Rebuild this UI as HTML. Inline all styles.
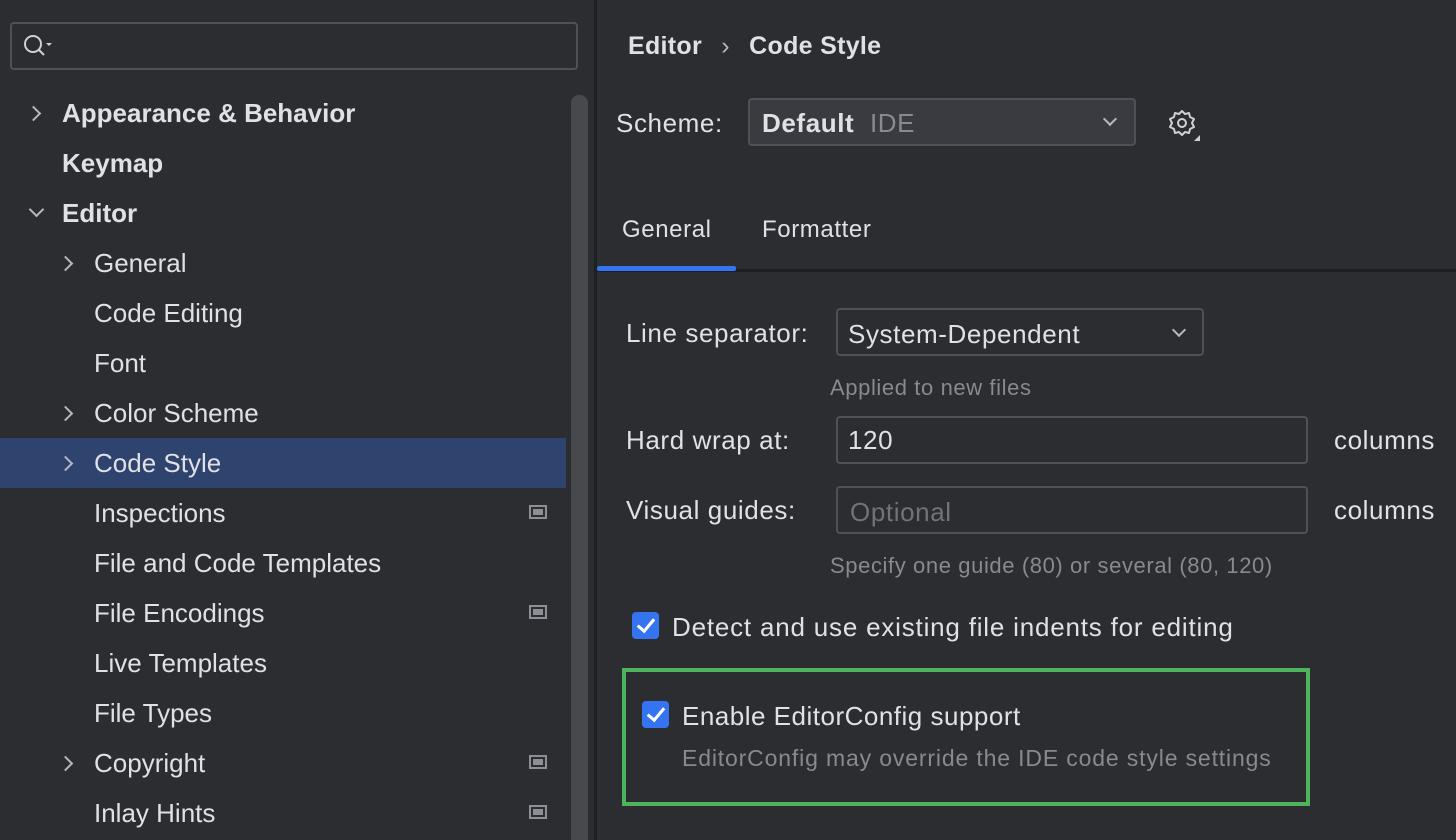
<!DOCTYPE html>
<html><head><meta charset="utf-8"><style>
html,body{margin:0;width:1456px;height:840px;overflow:hidden}
body{background:#2b2d30;font-family:"Liberation Sans",sans-serif;color:#dfe1e5;position:relative}
.a{position:absolute;white-space:nowrap}
.row{position:absolute;left:0;width:566px;height:50px;line-height:50px;font-size:26px}
.sel{background:#2e436e}
.chev{position:absolute;width:9px;height:9px;border-right:2px solid #b4b8bf;border-bottom:2px solid #b4b8bf}
.r{transform:rotate(-45deg)}.d{transform:rotate(45deg)}
.ic{position:absolute;left:529px;width:14px;height:10px;border:2px solid #8c9096;background:#2b2d30}
.ic:after{content:"";position:absolute;left:2px;top:2px;width:10px;height:6px;background:#8c9096}
.box{position:absolute;border:2px solid #4e5157;border-radius:4px;box-sizing:border-box}
.lbl{font-size:26px;letter-spacing:0.6px}
.cb{position:absolute;width:27px;height:27px;background:#3574f0;border-radius:4px}
.cb:after{content:"";position:absolute;left:9px;top:3px;width:7px;height:14px;border-right:3.5px solid #fff;border-bottom:3.5px solid #fff;transform:rotate(40deg)}
.hint{color:#868a91;font-size:22px;letter-spacing:0.6px}
</style></head><body>
<div class="box" style="left:10px;top:22px;width:568px;height:48px;border-color:#4e5157"></div>
<svg class="a" style="left:22px;top:33px" width="36" height="28"><circle cx="11" cy="11" r="8" fill="none" stroke="#ced0d6" stroke-width="2"/><path d="M17 17l5 5" stroke="#ced0d6" stroke-width="2"/><path d="M24 10h6l-3 3z" fill="#ced0d6"/></svg>
<div class="a" style="left:571px;top:95px;width:17px;height:745px;background:#48494c;border-radius:8px 8px 0 0"></div>
<div class="a" style="left:594px;top:0;width:3px;height:840px;background:#1e1f22"></div>

<div class="row" style="top:88px"><div class="chev r" style="left:28px;top:20px"></div><span class="a" style="left:62px;font-weight:bold">Appearance &amp; Behavior</span></div>
<div class="row" style="top:138px"><span class="a" style="left:62px;font-weight:bold">Keymap</span></div>
<div class="row" style="top:188px"><div class="chev d" style="left:31px;top:16px"></div><span class="a" style="left:62px;font-weight:bold">Editor</span></div>
<div class="row" style="top:238px"><div class="chev r" style="left:60px;top:20px"></div><span class="a" style="left:94px">General</span></div>
<div class="row" style="top:288px"><span class="a" style="left:94px">Code Editing</span></div>
<div class="row" style="top:338px"><span class="a" style="left:94px">Font</span></div>
<div class="row" style="top:388px"><div class="chev r" style="left:60px;top:20px"></div><span class="a" style="left:94px">Color Scheme</span></div>
<div class="row sel" style="top:438px"><div class="chev r" style="left:60px;top:20px"></div><span class="a" style="left:94px">Code Style</span></div>
<div class="row" style="top:488px"><span class="a" style="left:94px">Inspections</span><div class="ic" style="top:17px"></div></div>
<div class="row" style="top:538px"><span class="a" style="left:94px">File and Code Templates</span></div>
<div class="row" style="top:588px"><span class="a" style="left:94px">File Encodings</span><div class="ic" style="top:17px"></div></div>
<div class="row" style="top:638px"><span class="a" style="left:94px">Live Templates</span></div>
<div class="row" style="top:688px"><span class="a" style="left:94px">File Types</span></div>
<div class="row" style="top:738px"><div class="chev r" style="left:60px;top:20px"></div><span class="a" style="left:94px">Copyright</span><div class="ic" style="top:17px"></div></div>
<div class="row" style="top:788px"><span class="a" style="left:94px">Inlay Hints</span><div class="ic" style="top:17px"></div></div>

<div class="a" style="left:628px;top:32px;font-size:25px;font-weight:bold;letter-spacing:0.3px">Editor <span style="font-weight:normal;color:#b4b8bf;margin:0 12px">›</span> Code Style</div>
<div class="a lbl" style="left:616px;top:108px">Scheme:</div>
<div class="box" style="left:748px;top:98px;width:388px;height:48px;background:#393b40"></div>
<div class="a lbl" style="left:762px;top:108px"><b>Default</b>&nbsp; <span style="color:#868a91">IDE</span></div>
<div class="chev d" style="position:absolute;left:1105px;top:114px;width:8px;height:8px"></div>
<svg class="a" style="left:1166px;top:107px" width="36" height="36"><circle cx="16" cy="16" r="4" fill="none" stroke="#ced0d6" stroke-width="2"/><path d="M16 4l3 3 4-1 1 4 4 2-2 4 2 4-4 2-1 4-4-1-3 3-3-3-4 1-1-4-4-2 2-4-2-4 4-2 1-4 4 1z" fill="none" stroke="#ced0d6" stroke-width="2" stroke-linejoin="round"/><path d="M34 28v6h-6z" fill="#ced0d6"/></svg>
<div class="a lbl" style="left:622px;top:216px;font-size:24px">General</div>
<div class="a lbl" style="left:762px;top:216px;font-size:24px">Formatter</div>
<div class="a" style="left:597px;top:269px;width:859px;height:3px;background:#1e1f22"></div>
<div class="a" style="left:597px;top:266px;width:139px;height:5px;background:#3574f0;border-radius:2px"></div>

<div class="a lbl" style="left:626px;top:318px">Line separator:</div>
<div class="box" style="left:836px;top:308px;width:368px;height:48px;background:#2b2d30"></div>
<div class="a lbl" style="left:848px;top:319px">System-Dependent</div>
<div class="chev d" style="position:absolute;left:1174px;top:325px;width:8px;height:8px"></div>
<div class="a hint" style="left:830px;top:375px">Applied to new files</div>
<div class="a lbl" style="left:626px;top:425px">Hard wrap at:</div>
<div class="box" style="left:836px;top:416px;width:472px;height:48px;background:#2b2d30"></div>
<div class="a lbl" style="left:848px;top:425px">120</div>
<div class="a lbl" style="left:1334px;top:425px">columns</div>
<div class="a lbl" style="left:626px;top:495px">Visual guides:</div>
<div class="box" style="left:836px;top:486px;width:472px;height:48px;background:#2b2d30"></div>
<div class="a lbl" style="left:850px;top:497px;color:#6f737a">Optional</div>
<div class="a lbl" style="left:1334px;top:495px">columns</div>
<div class="a hint" style="left:830px;top:553px">Specify one guide (80) or several (80, 120)</div>
<div class="cb" style="left:632px;top:612px"></div>
<div class="a lbl" style="left:672px;top:612px;letter-spacing:0.8px">Detect and use existing file indents for editing</div>
<div class="a" style="left:622px;top:668px;width:688px;height:138px;box-sizing:border-box;border:4px solid #4db45c"></div>
<div class="cb" style="left:642px;top:701px"></div>
<div class="a lbl" style="left:682px;top:701px;letter-spacing:0.5px">Enable EditorConfig support</div>
<div class="a" style="left:682px;top:745px;color:#868a91;font-size:23px;letter-spacing:0.85px">EditorConfig may override the IDE code style settings</div>
</body></html>
